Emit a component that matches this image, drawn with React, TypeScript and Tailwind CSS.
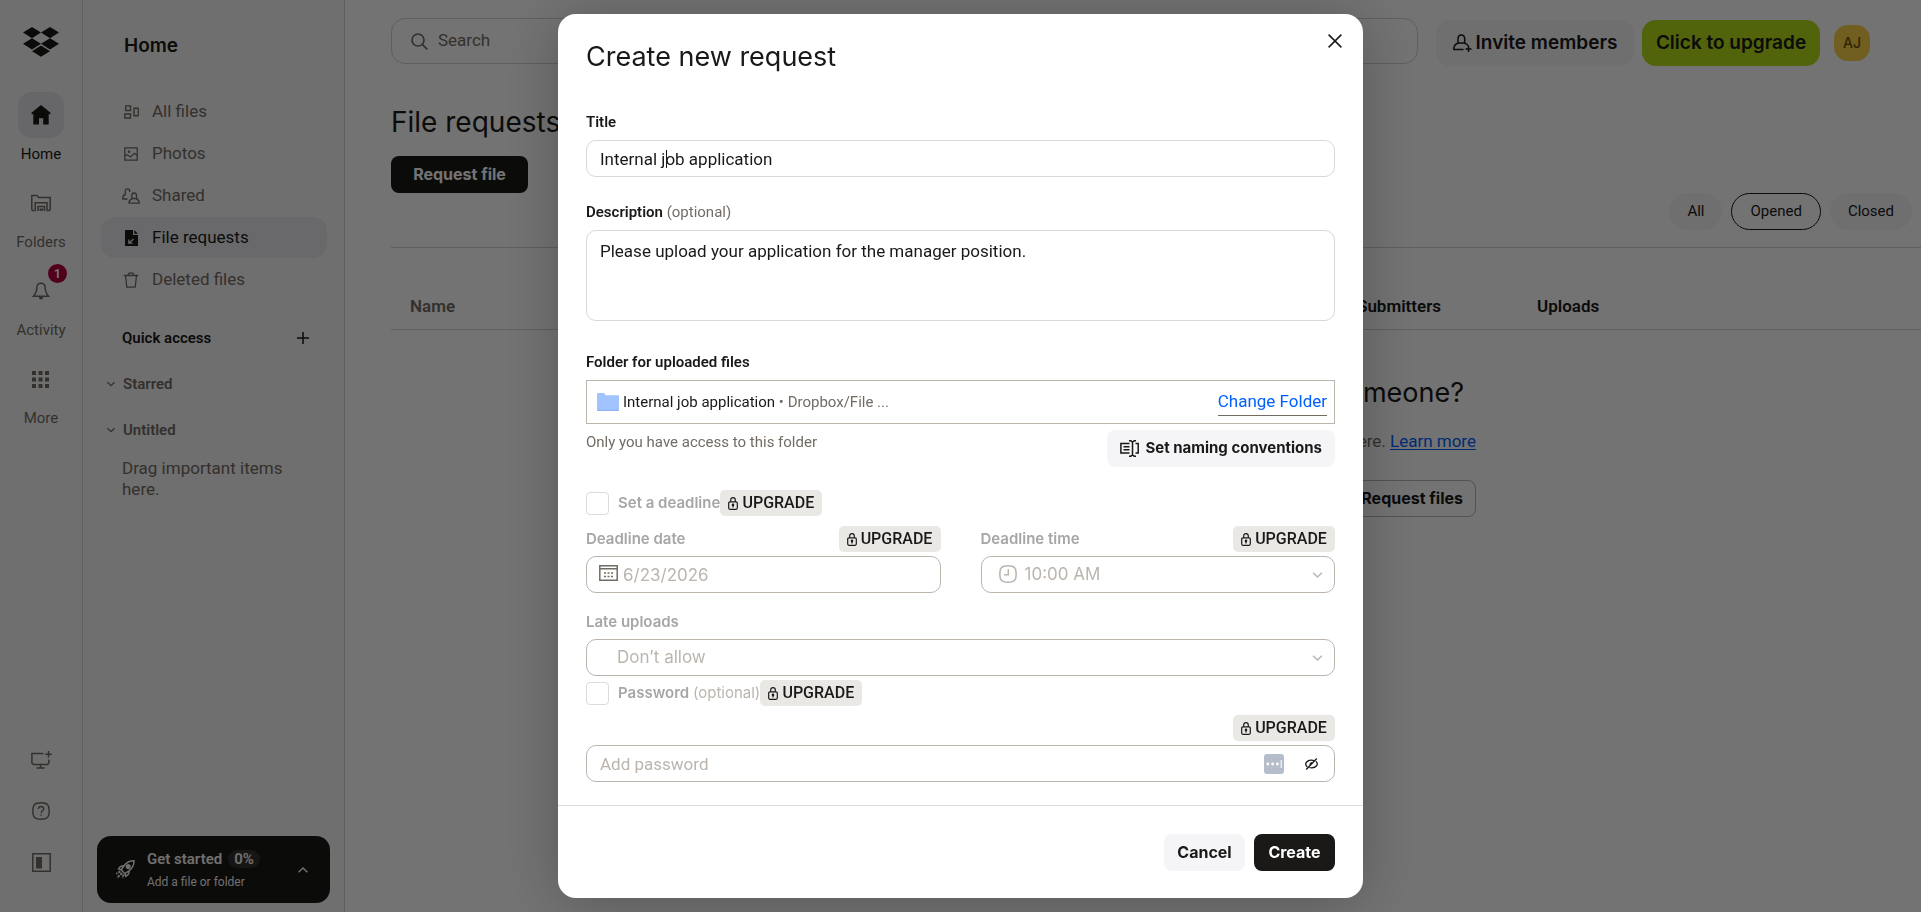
import { useState } from "react";
import type { ReactNode } from "react";

type IconProps = { className?: string };

const display = "font-['Inter','Liberation_Sans',sans-serif]";

function Logo() {
  return (
    <svg viewBox="0 0 36 30" className="h-[30px] w-9" fill="#1a1918" aria-hidden="true">
      <path d="M9 0l9 5.6-9 5.6-9-5.6zM27 0l9 5.6-9 5.6-9-5.6zM9 11.2l9 5.6-9 5.6-9-5.6zM27 11.2l9 5.6-9 5.6-9-5.6zM18 18.6l9 5.6-9 5.6-9-5.6z" />
    </svg>
  );
}

function HomeIcon() {
  return (
    <svg viewBox="0 0 20 20" className="size-5" fill="#1a1918" aria-hidden="true">
      <path d="M10 0l9.800 8-1 1.400-1.100-.7V19.500h-5.500v-6.200H8v6.200H2.300V8.700l-1.100.7-1-1.400z" />
    </svg>
  );
}

function FolderRailIcon() {
  return (
    <svg viewBox="0 0 20 18" className="h-[18px] w-5" fill="none" stroke="currentColor" strokeWidth="1.500" aria-hidden="true">
      <path d="M3.500 16.500H1.500l-.7-.7V1.500h5.200l1.500 2h11.700v12.300l-.7.700h-2" />
      <path d="M4.200 17.200V8.700h11.800v8.500M7 17v-4.500h6.500V17M9.300 17v-1.800h2V17" />
    </svg>
  );
}

function BellIcon() {
  return (
    <svg viewBox="0 0 18 18" className="size-[18px]" fill="none" stroke="currentColor" strokeWidth="1.500" aria-hidden="true">
      <path d="M9 1.200C6 1.200 5 2.900 4.900 5c-.1 4-1 6.500-3.400 9.200h15C14 11.500 13.200 9 13.100 5 13 2.900 12 1.200 9 1.200z" />
      <path d="M7 15h4v1c0 .8-.7 1.400-2 1.400S7 16.800 7 16z" fill="currentColor" stroke="none" />
    </svg>
  );
}

function GridIcon() {
  return (
    <svg viewBox="0 0 17 17" className="size-[17px]" fill="currentColor" aria-hidden="true">
      <path d="M0 0h4v4H0zM6.500 0h4v4h-4zM13 0h4v4h-4zM0 6.500h4v4H0zM6.500 6.500h4v4h-4zM13 6.500h4v4h-4zM0 13h4v4H0zM6.500 13h4v4h-4zM13 13h4v4h-4z" />
    </svg>
  );
}

function MonitorPlusIcon() {
  return (
    <svg viewBox="0 0 21 18" className="h-[18px] w-[21px]" fill="none" stroke="currentColor" strokeWidth="1.500" aria-hidden="true">
      <path d="M12.500 2.500H.9v9.500L2.500 13.500h14l1.400-1.500V8.500M9.500 13.500v3.500M5.500 17h8M17.500 0v6.500M14.200 3.200h6.600" />
    </svg>
  );
}

function HelpIcon() {
  return (
    <svg viewBox="0 0 18 18" className="size-[18px]" fill="none" stroke="currentColor" strokeWidth="1.400" aria-hidden="true">
      <path d="M9 .8c6.200 0 8.200 2 8.200 8.200s-2 8.200-8.200 8.200S.8 15.200.8 9 2.800.8 9 .8z" />
      <path d="M6.300 7c.1-1.600 1.200-2.500 2.700-2.500s2.700.9 2.700 2.300c0 1.900-2.600 1.900-2.600 4.200M9.100 12.300v1.500" />
    </svg>
  );
}

function PanelIcon() {
  return (
    <svg viewBox="0 0 19 19" className="size-[19px]" aria-hidden="true">
      <path d="M.8.8h17.400v17.400H.8z" fill="none" stroke="currentColor" strokeWidth="1.500" />
      <path d="M4 4h6v11.500H4z" fill="currentColor" />
    </svg>
  );
}

function AllFilesIcon() {
  return (
    <svg viewBox="0 0 15 14" className="h-3.5 w-[15px]" fill="none" stroke="currentColor" strokeWidth="1.400" aria-hidden="true">
      <path d="M1.700.9h4.800v4.600H1.700zM.8 9h5.700v4H.8zM10 3.200h4.200v7.600H10z" />
    </svg>
  );
}

function PhotosIcon() {
  return (
    <svg viewBox="0 0 14 14" className="size-3.5" fill="none" stroke="currentColor" strokeWidth="1.300" aria-hidden="true">
      <path d="M.8.8h12.400v12.400H.8zM1 9l2-1.200L6.500 10l4-3.700L13 8.500" />
      <circle cx="5" cy="4.800" r="1.300" fill="currentColor" stroke="none" />
    </svg>
  );
}

function SharedIcon() {
  return (
    <svg viewBox="0 0 18 16" className="h-4 w-[18px]" fill="none" stroke="currentColor" strokeWidth="1.300" aria-hidden="true">
      <path d="M5.500 11H.8C.7 8.500 1.500 7 3.300 6.500V3C3.300 1.500 4 .8 5.500.8S7.700 1.500 7.700 3v1" />
      <path d="M7 15.200h10.200c0-2.500-.8-3.700-2.700-4.200V7.500c0-1.700-.8-2.500-2.300-2.500S9.800 5.800 9.800 7.500V11c-1.900.5-2.800 1.700-2.800 4.200zM9.800 10.500h4.700" />
    </svg>
  );
}

function RequestIcon() {
  return (
    <svg viewBox="0 0 13 16" className="h-4 w-[13px]" fill="currentColor" aria-hidden="true">
      <path d="M0 0h8v5h5v11H0zM9.300 0L13 3.700H9.300z" />
      <path d="M8.500 9L4 13M3.800 9.500v3.700h3.700" fill="none" stroke="#e3e3e8" strokeWidth="1.300" />
    </svg>
  );
}

function TrashIcon() {
  return (
    <svg viewBox="0 0 16 16" className="size-4" fill="none" stroke="currentColor" strokeWidth="1.300" aria-hidden="true">
      <path d="M.8 3.500h14.400M5.200 3.300C5.200 1.500 6 .8 8 .8s2.800.7 2.800 2.500M2.500 3.500l1.300 11.700h8.400l1.300-11.700" />
    </svg>
  );
}

function PlusIcon() {
  return (
    <svg viewBox="0 0 12 12" className="size-3" fill="none" stroke="#1a1918" strokeWidth="1.500" aria-hidden="true">
      <path d="M6 0v12M0 6h12" />
    </svg>
  );
}

function Chevron({ className = "" }: IconProps) {
  return (
    <svg viewBox="0 0 10 6" className={className} fill="none" stroke="currentColor" strokeWidth="1.500" aria-hidden="true">
      <path d="M.6.8L5 5 9.400.8" />
    </svg>
  );
}

function RocketIcon() {
  return (
    <svg viewBox="0 0 20 19" className="h-[19px] w-5 shrink-0" fill="none" stroke="#f7f5f2" strokeWidth="1.500" aria-hidden="true">
      <path d="M19 .8c-4.500 0-7.500 1.500-10 5L6.200 10l3.600 3.600 4.200-2.800c3.500-2.500 5-5.500 5-10z" />
      <path d="M9 5.800C6.500 5.500 4.800 6.500 3.500 9l3 .7M14 10.800c.3 2.500-.7 4.200-3.200 5.500L10 13.300" />
      <path d="M5.300 11.300l-4 2.500M7 13l-5 5M8.700 14.500l-1.500 3.700" strokeWidth="2" strokeDasharray="2.400 1" />
      <circle cx="13.200" cy="6.600" r="1.800" fill="#f7f5f2" />
    </svg>
  );
}

function SearchIcon() {
  return (
    <svg viewBox="0 0 17 17" className="size-[17px]" fill="none" stroke="currentColor" strokeWidth="1.700" aria-hidden="true">
      <circle cx="7" cy="7" r="6" />
      <path d="M11.300 11.300l5 5" />
    </svg>
  );
}

function InviteIcon() {
  return (
    <svg viewBox="0 0 19 18" className="h-[18px] w-[19px]" fill="none" stroke="currentColor" strokeWidth="1.500" aria-hidden="true">
      <path d="M10.500 15.500H.8c0-3.500 1.200-5.500 4.200-6.200V5C5 2.200 6 .9 8.300.9s3.400 1.300 3.400 4.100v4.300c1.800.4 3 1.300 3.600 2.700M5 9h6.700M15.500 12v6M12.500 15h6" />
    </svg>
  );
}

function CloseIcon() {
  return (
    <svg viewBox="0 0 14 14" className="size-3.5" fill="none" stroke="currentColor" strokeWidth="1.500" aria-hidden="true">
      <path d="M.6.6l12.800 12.800M13.400.6L.6 13.400" />
    </svg>
  );
}

function FolderIcon() {
  return (
    <svg viewBox="0 0 22 18" className="h-[18px] w-[22px]" aria-hidden="true">
      <path d="M0 1c0-.6.4-1 1-1h6l1.500 2.300H21c.6 0 1 .4 1 1V17c0 .6-.4 1-1 1H1c-.6 0-1-.4-1-1z" fill="#a1c4ff" />
      <path d="M0 16.800h22V17c0 .6-.4 1-1 1H1c-.6 0-1-.4-1-1z" fill="#8db4f5" />
    </svg>
  );
}

function NamingIcon() {
  return (
    <svg viewBox="0 0 19 17" className="h-[17px] w-[19px]" fill="none" stroke="currentColor" strokeWidth="1.500" aria-hidden="true">
      <path d="M9.500 3.500H.9v9.500h8.600M3.500 6.700h6M3.500 9.700h6M15.500 3.500h2.700v9.500h-2.700M12.500 1.500v14M9 .8h1.800l1.700 1.200L14.200.8H16M9 16.200h1.800l1.700-1.200 1.700 1.200H16" />
    </svg>
  );
}

function LockIcon() {
  return (
    <svg viewBox="0 0 10 13" className="h-[13px] w-2.5" fill="none" stroke="currentColor" strokeWidth="1.200" aria-hidden="true">
      <rect x=".7" y="4.800" width="8.600" height="7.500" rx="1.200" />
      <path d="M2.700 4.800V3C2.700 1.500 3.500.7 5 .7S7.300 1.500 7.300 3v1.800M5 8v2.500" />
      <circle cx="5" cy="7.900" r=".7" fill="currentColor" />
    </svg>
  );
}

function CalendarIcon() {
  return (
    <svg viewBox="0 0 19 16" className="h-4 w-[19px]" fill="none" stroke="#736c64" strokeWidth="1.500" aria-hidden="true">
      <path d="M.8.8h17.400v14.400H.8zM.8 3.800h17.400" />
      <path d="M5 8h2M8.500 8h2M12 8h2M5 11.500h2M8.500 11.500h2M12 11.500h2" />
    </svg>
  );
}

function ClockIcon() {
  return (
    <svg viewBox="0 0 18 18" className="size-[18px]" fill="none" stroke="currentColor" strokeWidth="1.500" aria-hidden="true">
      <path d="M9 .8c6.200 0 8.200 2 8.200 8.200s-2 8.200-8.200 8.200S.8 15.200.8 9 2.800.8 9 .8zM9.300 4v5.800H5" />
    </svg>
  );
}

function ManagerIcon() {
  return (
    <svg viewBox="0 0 20 20" className="size-5" aria-hidden="true">
      <rect width="20" height="20" rx="3" fill="#b5bdca" />
      <circle cx="3.800" cy="10" r="1.400" fill="#fff" />
      <circle cx="8.600" cy="10" r="1.400" fill="#fff" />
      <circle cx="13.400" cy="10" r="1.400" fill="#fff" />
      <path d="M17.200 6v8" stroke="#fff" strokeWidth="1" />
    </svg>
  );
}

function EyeOffIcon() {
  return (
    <svg viewBox="0 0 13 12" className="h-3 w-[13px]" fill="none" stroke="#1a1918" strokeWidth="1.300" aria-hidden="true">
      <path d="M2.300 9C1.200 8 .7 7 .7 6c0-2 2.500-3.800 5.800-3.800 1 0 1.800.1 2.500.4M10.800 3.300c1 .8 1.500 1.700 1.500 2.700 0 2-2.500 3.800-5.800 3.800-.8 0-1.500-.1-2.200-.3M1.200 11.500L11.800.5" />
      <path d="M4.800 7.800A2.500 2.500 0 0 1 8 4.300z" fill="#1a1918" stroke="none" />
    </svg>
  );
}

function RailItem({ label, active, badge, children }: { label: string; active?: boolean; badge?: string; children: ReactNode }) {
  return (
    <a href="#" className={`flex flex-col items-center gap-1 text-[15px] leading-6 ${active ? "text-[#1a1918]" : "text-[#736c64]"}`}>
      <span className={`relative flex size-[46px] items-center justify-center rounded-[14px] ${active ? "bg-[#e4e4ea]" : ""}`}>
        {children}
        {badge && (
          <span className="absolute -top-1 -right-[3px] flex size-[19px] items-center justify-center rounded-full bg-[#b4003c] text-xs font-bold text-white">
            {badge}
          </span>
        )}
      </span>
      {label}
    </a>
  );
}

function NavItem({ label, active, children }: { label: string; active?: boolean; children: ReactNode }) {
  return (
    <a
      href="#"
      className={`flex h-[41px] items-center rounded-[14px] pl-[21px] text-[17px] ${active ? "bg-[#e9e9ef] text-[#1a1918]" : "text-[#736c64]"}`}
    >
      <span className="flex w-[18px] justify-center">{children}</span>
      <span className="ml-3">{label}</span>
    </a>
  );
}

function UpgradeBadge() {
  return (
    <button type="button" className="flex h-[26px] w-[102px] items-center justify-center gap-1 rounded-[5px] bg-[#eae8e4] text-base font-medium text-[#1a1918]">
      <LockIcon />
      UPGRADE
    </button>
  );
}

const fieldLabel = "text-[15px] leading-5 font-semibold text-[#1a1918]";
const lockedLabel = "text-[15px] leading-5 font-semibold text-[#a6a6a6]";
const lockedField = "h-[37px] w-full rounded-[10px] border border-[#bbb5ae] bg-white text-[17px] text-[#bbb5ae] opacity-100 placeholder:text-[#bbb5ae]";

function Rail() {
  return (
    <nav className="flex w-[83px] shrink-0 flex-col items-center border-r border-[#d4d2d0] bg-[#f7f7f7] pt-[27px] pb-10 text-[#736c64]">
      <a href="#" aria-label="Dropbox">
        <Logo />
      </a>
      <div className="mt-[35px] flex flex-col gap-3.5">
        <RailItem label="Home" active>
          <HomeIcon />
        </RailItem>
        <RailItem label="Folders">
          <FolderRailIcon />
        </RailItem>
        <RailItem label="Activity" badge="1">
          <BellIcon />
        </RailItem>
        <RailItem label="More">
          <GridIcon />
        </RailItem>
      </div>
      <div className="mt-auto flex flex-col items-center gap-[33px]">
        <button type="button" aria-label="Install desktop app">
          <MonitorPlusIcon />
        </button>
        <button type="button" aria-label="Help">
          <HelpIcon />
        </button>
        <button type="button" aria-label="Toggle sidebar">
          <PanelIcon />
        </button>
      </div>
    </nav>
  );
}

function Sidebar() {
  return (
    <aside className="flex w-[262px] shrink-0 flex-col border-r border-[#d4d2d0] bg-[#f7f7f7] pt-[34px] pb-[9px] text-[#736c64]">
      <h2 className={`${display} ml-[41px] text-[19px] leading-6 font-semibold text-[#1a1918]`}>Home</h2>
      <div className="mt-[33px] mr-[17px] ml-[18px] flex flex-col gap-px">
        <NavItem label="All files">
          <AllFilesIcon />
        </NavItem>
        <NavItem label="Photos">
          <PhotosIcon />
        </NavItem>
        <NavItem label="Shared">
          <SharedIcon />
        </NavItem>
        <NavItem label="File requests" active>
          <RequestIcon />
        </NavItem>
        <NavItem label="Deleted files">
          <TrashIcon />
        </NavItem>
      </div>
      <div className="mt-[26px] mr-[35px] ml-[39px] flex h-6 items-center justify-between text-[15px] font-semibold text-[#1a1918]">
        Quick access
        <button type="button" aria-label="Add quick access section">
          <PlusIcon />
        </button>
      </div>
      <button type="button" className="mt-[22px] ml-6 flex h-6 items-center gap-2 text-[15px] font-semibold">
        <Chevron className="h-1.5 w-2" />
        Starred
      </button>
      <button type="button" className="mt-[22px] ml-6 flex h-6 items-center gap-2 text-[15px] font-semibold">
        <Chevron className="h-1.5 w-2" />
        Untitled
      </button>
      <p className="mt-4 mr-12 ml-[39px] text-[17px] leading-[21px]">Drag important items here.</p>
      <button type="button" className="mx-3.5 mt-auto flex h-[67px] items-center rounded-[14px] bg-[#1a1918] pr-[22px] pl-[18px] text-left text-[#f7f5f2]">
        <RocketIcon />
        <span className="ml-3 flex flex-col">
          <span className="flex items-center gap-1.5 text-[15px] leading-6 font-semibold">
            Get started
            <span className="rounded-full bg-[#33322f] px-1.5 leading-[18px]">0%</span>
          </span>
          <span className="text-xs leading-[22px]">Add a file or folder</span>
        </span>
        <Chevron className="ml-auto h-1.5 w-2.5 rotate-180" />
      </button>
    </aside>
  );
}

function RequestsPage() {
  const filters = ["All", "Opened", "Closed"];
  return (
    <main className="min-w-0 flex-1 bg-white pt-[18px] pl-[46px] text-[#1a1918]">
      <header className="flex h-[46px] items-start pr-[51px]">
        <div className="flex h-[46px] min-w-0 flex-1 items-center gap-2.5 rounded-[14px] border border-[#d4d2d0] px-[19px] text-[#736c64]">
          <SearchIcon />
          <input type="search" aria-label="Search" placeholder="Search" className="min-w-0 flex-1 bg-transparent text-[17px] placeholder:text-[#736c64]" />
        </div>
        <div className={`${display} mt-0.5 ml-[18px] flex items-center`}>
          <button type="button" className="flex h-[46px] w-[198px] items-center justify-center gap-1 rounded-[14px] bg-[#f5f5f8] text-[19px] font-semibold whitespace-nowrap">
            <InviteIcon />
            Invite members
          </button>
          <button type="button" className="ml-2 flex h-[46px] w-[178px] items-center justify-center rounded-[14px] bg-[#b4dc19] text-[19px] font-semibold whitespace-nowrap">
            Click to upgrade
          </button>
          <button type="button" aria-label="Account" className="ml-3.5 size-9 rounded-[14px] bg-[#fad24b] text-sm font-medium text-[#6b4f00]">
            AJ
          </button>
        </div>
      </header>
      <h1 className={`${display} mt-[42px] text-[28px] leading-8`}>File requests</h1>
      <button type="button" className={`${display} mt-[18px] block h-[37px] w-[137px] rounded-lg bg-[#1a1918] pb-0.5 text-base font-bold text-white`}>
        Request file
      </button>
      <div className="flex justify-end gap-[9px] pr-[9px]">
        {filters.map((name) => (
          <button
            key={name}
            type="button"
            className={`h-[37px] rounded-full px-[18px] text-[15px] ${name === "Opened" ? "border border-[#1a1918]" : "bg-[#f5f5f8]"}`}
          >
            {name}
          </button>
        ))}
      </div>
      <table className="mt-[17px] w-full table-fixed border-y border-[#d4d2d0] text-left text-[17px]">
        <thead>
          <tr className="h-[82px]">
            <th className="pt-9 pl-[19px] font-semibold text-[#736c64]">Name</th>
            <th className="w-[180px] pt-9 font-semibold">Submitters</th>
            <th className="w-[384px] pt-9 font-semibold">Uploads</th>
          </tr>
        </thead>
      </table>
      <section className="mx-auto mt-[45px] flex w-[640px] flex-col items-end">
        <h2 className={`${display} pr-3 text-[27px] leading-9`}>Need something from someone?</h2>
        <p className="mt-[18px] text-[17px] leading-6 text-[#736c64]">
          Request files from anyone, and they’ll show up here.{" "}
          <a href="#" className="text-[#0061fe] underline underline-offset-2">
            Learn more
          </a>
        </p>
        <button type="button" className={`${display} mt-[27px] h-[37px] rounded-lg border border-[#bbb5ae] px-3 pb-0.5 text-base font-bold`}>
          Request files
        </button>
      </section>
    </main>
  );
}

function CreateRequestDialog() {
  const [title, setTitle] = useState("Internal job application");
  const [description, setDescription] = useState("Please upload your application for the manager position.");

  return (
    <div role="dialog" aria-modal="true" aria-labelledby="dialog-title" className="m-auto w-full max-w-[805px] rounded-[18px] bg-white pt-[27px] text-[#1a1918] shadow-[0_4px_60px_rgba(0,0,0,0.25)]">
      <form className="flex flex-col">
        <div className="flex flex-col px-7">
          <div className="flex h-8 items-start justify-between">
            <h2 id="dialog-title" className={`${display} text-[27px] leading-8`}>
              Create new request
            </h2>
            <button type="button" aria-label="Close" className="-mt-3.5 -mr-3.5 p-[7px]">
              <CloseIcon />
            </button>
          </div>

          <label htmlFor="title" className={`${fieldLabel} mt-[39px]`}>
            Title
          </label>
          <div className="relative mt-2">
            <input
              id="title"
              value={title}
              onChange={(e) => setTitle(e.target.value)}
              className="h-[37px] w-full rounded-[10px] border border-[#d9d8d6] px-[13px] text-[17px]"
            />
            {/* text caret */}
            <span className="absolute top-2.5 left-20 h-[18px] w-px bg-[#1a1918]" />
          </div>

          <label htmlFor="description" className={`${fieldLabel} mt-[25px]`}>
            Description <span className="font-normal text-[#736c64]">(optional)</span>
          </label>
          <textarea
            id="description"
            value={description}
            onChange={(e) => setDescription(e.target.value)}
            className="mt-2 h-[91px] w-full resize-none rounded-[10px] border border-[#d9d8d6] px-[13px] py-2 text-[17px] leading-6"
          />

          <span className={`${fieldLabel} mt-[31px]`}>Folder for uploaded files</span>
          <div className="mt-2 flex h-11 items-center border border-[#bbb5ae] pr-[7px] pl-2.5">
            <FolderIcon />
            <span className="ml-1 text-[15px]">
              Internal job application <span className="text-[#736c64]">• Dropbox/File ...</span>
            </span>
            <button type="button" className="ml-auto h-7 border-b border-[#736c64] text-[17px] text-[#0061fe]">
              Change Folder
            </button>
          </div>
          <div className="mt-1.5 flex items-start justify-between">
            <span className="mt-0.5 text-[15px] leading-5 text-[#736c64]">Only you have access to this folder</span>
            <button type="button" className={`${display} flex h-[37px] items-center gap-1.5 rounded-lg bg-[#f5f5f8] px-[13px] text-[15px] font-bold`}>
              <NamingIcon />
              Set naming conventions
            </button>
          </div>

          <div className="mt-[23px] flex items-center">
            <input id="deadline" type="checkbox" disabled className="size-[23px] appearance-none rounded border border-[#dddcda] bg-white" />
            <label htmlFor="deadline" className={`${display} ${lockedLabel} ml-[9px]`}>
              Set a deadline
            </label>
            <UpgradeBadge />
          </div>

          <div className="mt-2.5 grid grid-cols-2 gap-10">
            <div>
              <div className="flex items-center justify-between">
                <label htmlFor="date" className={`${display} ${lockedLabel}`}>
                  Deadline date
                </label>
                <UpgradeBadge />
              </div>
              <div className="relative mt-1">
                <input id="date" disabled value="6/23/2026" readOnly className={`${lockedField} ${display} pl-9`} />
                <span className="absolute top-[9px] left-[13px]">
                  <CalendarIcon />
                </span>
              </div>
            </div>
            <div>
              <div className="flex items-center justify-between">
                <label htmlFor="time" className={`${display} ${lockedLabel}`}>
                  Deadline time
                </label>
                <UpgradeBadge />
              </div>
              <div className="relative mt-1 text-[#bbb5ae]">
                <select id="time" disabled className={`${lockedField} ${display} appearance-none pl-[43px]`}>
                  <option>10:00 AM</option>
                </select>
                <span className="absolute top-[9px] left-[18px]">
                  <ClockIcon />
                </span>
                <Chevron className="absolute top-4 right-3 h-1.5 w-[11px]" />
              </div>
            </div>
          </div>

          <label htmlFor="late" className={`${display} ${lockedLabel} mt-[19px]`}>
            Late uploads
          </label>
          <div className="relative mt-[7px] text-[#bbb5ae]">
            <select id="late" disabled className={`${lockedField} ${display} appearance-none pl-[30px]`}>
              <option>Don’t allow</option>
            </select>
            <Chevron className="absolute top-4 right-3 h-1.5 w-[11px]" />
          </div>

          <div className="mt-1 flex items-center">
            <input id="use-password" type="checkbox" disabled className="size-[23px] appearance-none rounded border border-[#dddcda] bg-white" />
            <label htmlFor="use-password" className={`${display} ${lockedLabel} ml-[9px]`}>
              Password <span className="font-normal text-[#bbb5ae]">(optional)</span>
            </label>
            <UpgradeBadge />
          </div>
          <div className="mt-[9px] flex justify-end">
            <UpgradeBadge />
          </div>
          <div className="relative mt-1">
            <input type="password" aria-label="Password" disabled placeholder="Add password" className={`${lockedField} px-[13px]`} />
            <div className="absolute top-0 right-[17px] flex h-full items-center gap-[21px]">
              <ManagerIcon />
              <button type="button" aria-label="Show password">
                <EyeOffIcon />
              </button>
            </div>
          </div>
        </div>

        <div className={`${display} mt-[23px] flex justify-end gap-[9px] border-t border-[#dddcda] px-7 pt-7 pb-[27px] text-base font-bold`}>
          <button type="button" className="h-[37px] w-[81px] rounded-lg bg-[#f5f5f8] pb-0.5">
            Cancel
          </button>
          <button type="button" className="h-[37px] w-[81px] rounded-lg bg-[#1a1918] pb-0.5 text-white">
            Create
          </button>
        </div>
      </form>
    </div>
  );
}

export default function App() {
  return (
    <div className="font-[Roboto,'Liberation_Sans',sans-serif]">
      <div className="flex min-h-screen">
        <Rail />
        <Sidebar />
        <RequestsPage />
      </div>
      <div className="fixed inset-0 flex overflow-auto bg-black/55">
        <CreateRequestDialog />
      </div>
    </div>
  );
}
